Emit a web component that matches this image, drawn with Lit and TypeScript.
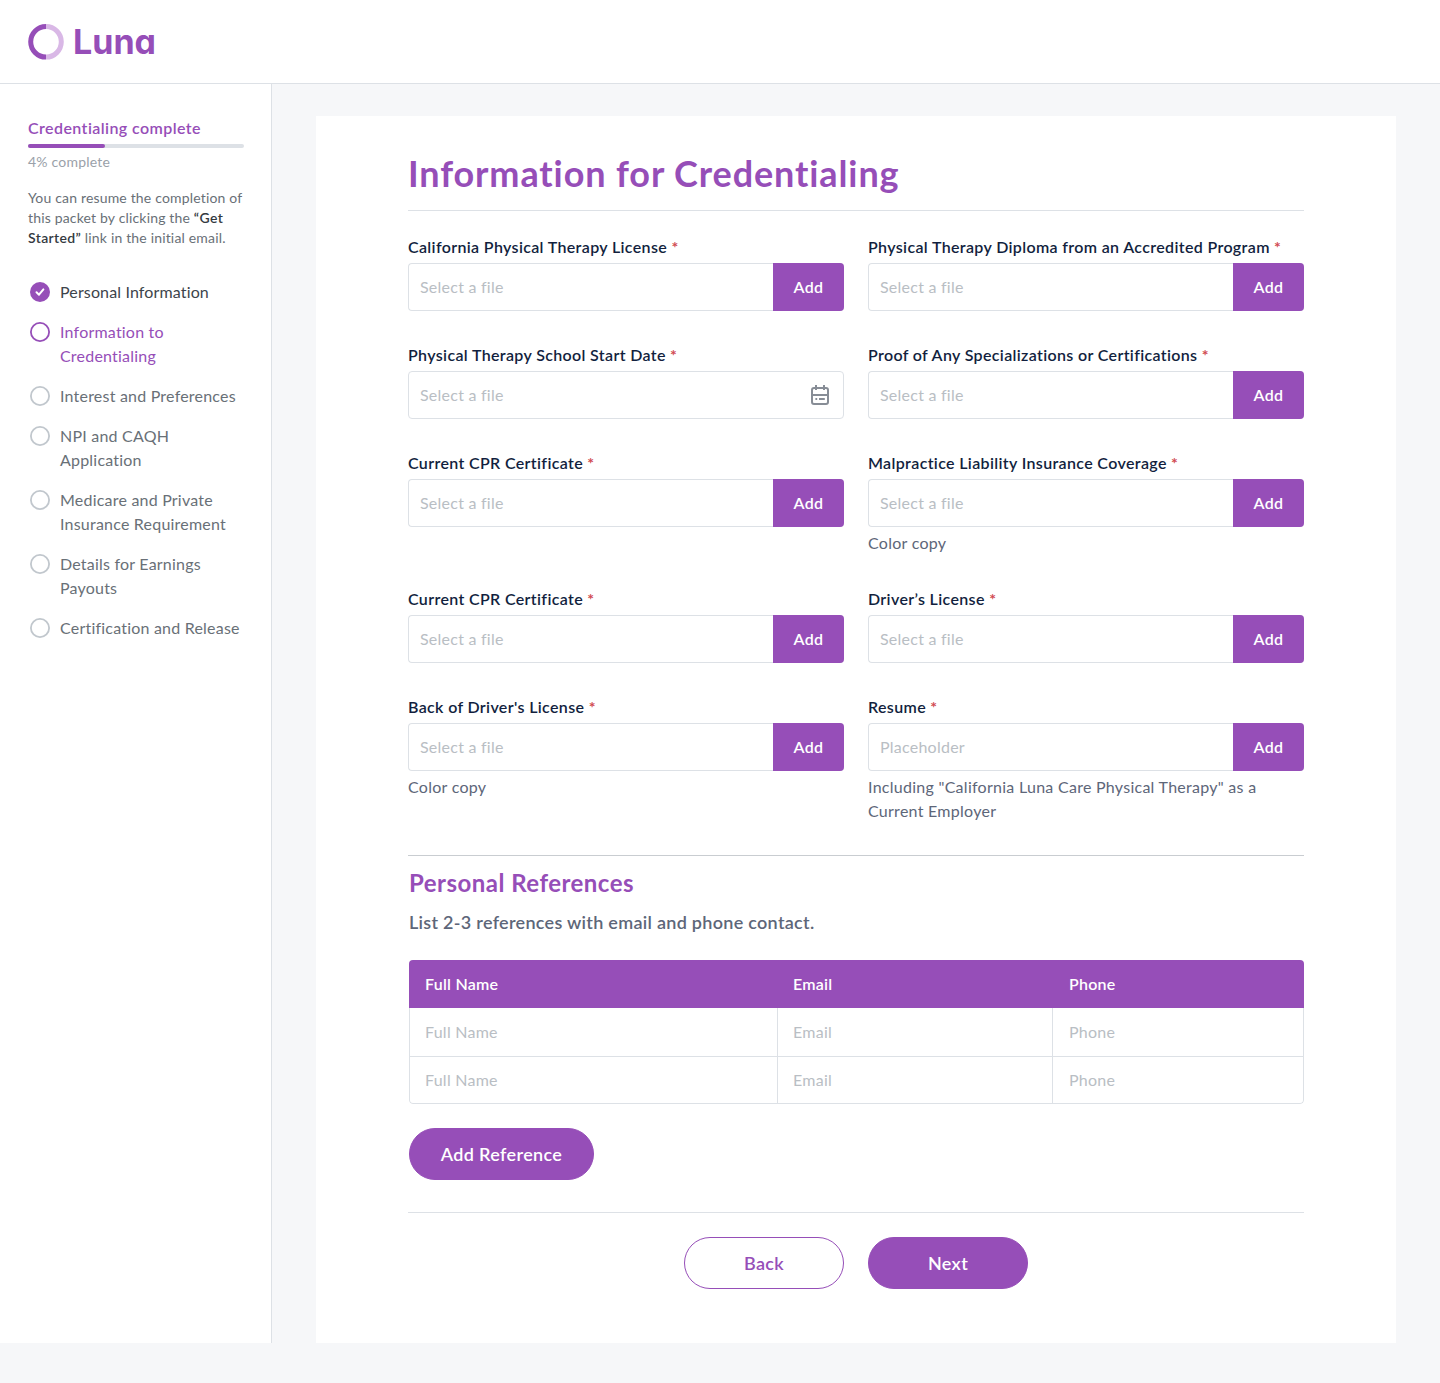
import { LitElement, html, css, svg, nothing } from "lit";
import { customElement, property } from "lit/decorators.js";
import { classMap } from "lit/directives/class-map.js";

interface Step {
  label: string;
  state: "done" | "current" | "todo";
}

interface Field {
  label: string;
  placeholder?: string;
  hint?: string;
  kind?: "file" | "date";
}

const STEPS: Step[] = [
  { label: "Personal Information", state: "done" },
  { label: "Information to Credentialing", state: "current" },
  { label: "Interest and Preferences", state: "todo" },
  { label: "NPI and CAQH Application", state: "todo" },
  { label: "Medicare and Private Insurance Requirement", state: "todo" },
  { label: "Details for Earnings Payouts", state: "todo" },
  { label: "Certification and Release", state: "todo" },
];

const FIELDS: Field[] = [
  { label: "California Physical Therapy License" },
  { label: "Physical Therapy Diploma from an Accredited Program" },
  { label: "Physical Therapy School Start Date", kind: "date" },
  { label: "Proof of Any Specializations or Certifications" },
  { label: "Current CPR Certificate" },
  { label: "Malpractice Liability Insurance Coverage", hint: "Color copy" },
  { label: "Current CPR Certificate" },
  { label: "Driver’s License" },
  { label: "Back of Driver's License", hint: "Color copy" },
  {
    label: "Resume",
    placeholder: "Placeholder",
    hint: 'Including "California Luna Care Physical Therapy" as a Current Employer',
  },
];

const COLUMNS = ["Full Name", "Email", "Phone"];

@customElement("step-item")
class StepItem extends LitElement {
  @property({ attribute: false }) step!: Step;

  static styles = css`
    :host { display: block; }
    .step {
      display: flex;
      gap: 10px;
      color: #697077;
      font-size: 16px;
      line-height: 24px;
      letter-spacing: 0.21px;
    }
    .icon { flex: none; width: 20px; height: 20px; margin: 2px 0 0 2px; color: #c1c7cd; }
    .label { flex: 1; min-width: 0; }
    .done { color: #3d444b; letter-spacing: 0.14px; }
    .current { color: #964eb8; }
    .done .icon, .current .icon { color: #964eb8; }
  `;

  render() {
    const { label, state } = this.step;
    return html`<div class=${classMap({ step: true, [state]: true })}>
      <svg class="icon" viewBox="0 0 20 20" fill="none">
        ${state === "done"
          ? svg`<circle cx="10" cy="10" r="10" fill="currentColor"/>
              <path d="M6.5 10.3 9 12.7 13.4 7.4" stroke="#fff" stroke-width="2" stroke-linecap="round" stroke-linejoin="round"/>`
          : svg`<circle cx="10" cy="10" r="9.1" stroke="currentColor" stroke-width="1.8"/>`}
      </svg>
      <span class="label">${label}</span>
    </div>`;
  }
}

@customElement("form-field")
class FormField extends LitElement {
  @property({ attribute: false }) field!: Field;

  static styles = css`
    :host { display: block; }
    .label {
      display: block;
      margin-bottom: 4px;
      color: #121f3e;
      font-size: 16px;
      font-weight: 600;
      line-height: 24px;
      letter-spacing: 0.35px;
      white-space: nowrap;
    }
    .required { color: #d14b51; font-weight: 700; }
    .control {
      box-sizing: border-box;
      display: flex;
      align-items: center;
      height: 48px;
      padding-left: 11px;
      border: 1px solid #dde1e6;
      border-radius: 4px;
      background: #fff;
    }
    .file { border-right: 0; }
    .placeholder {
      flex: 1;
      color: #b9bec4;
      font-size: 16px;
      line-height: 24px;
      letter-spacing: 0.24px;
    }
    .add {
      align-self: stretch;
      width: 71px;
      margin: -1px 0;
      padding: 0 0 2px;
      border: 0;
      border-radius: 0 4px 4px 0;
      background: #964eb8;
      color: #fff;
      font: inherit;
      font-size: 16px;
      font-weight: 600;
      letter-spacing: 0.4px;
    }
    .calendar { width: 24px; height: 24px; margin-right: 11px; color: #878d96; }
    .hint {
      margin-top: 4px;
      color: #5d6679;
      font-size: 16px;
      line-height: 24px;
      letter-spacing: 0.27px;
    }
  `;

  render() {
    const { label, placeholder = "Select a file", hint, kind = "file" } = this.field;
    return html`
      <span class="label">${label} <span class="required">*</span></span>
      <div class=${classMap({ control: true, [kind]: true })}>
        <span class="placeholder">${placeholder}</span>
        ${kind === "file"
          ? html`<button class="add">Add</button>`
          : html`<svg class="calendar" viewBox="0 0 24 24" fill="none" stroke="currentColor" stroke-width="2">
              <rect x="4" y="5" width="16" height="16" rx="2"/>
              <path d="M4 12H20M8 2V7M16 2V7M7.4 16H9.2M11 16H16.8"/>
            </svg>`}
      </div>
      ${hint ? html`<div class="hint">${hint}</div>` : nothing}
    `;
  }
}

@customElement("app-root")
class AppRoot extends LitElement {
  static styles = css`
    :host {
      display: block;
      height: 1383px;
      background: #f6f7f9;
      font-family: Lato, "Open Sans", sans-serif;
    }
    .header {
      box-sizing: border-box;
      display: flex;
      align-items: center;
      gap: 9px;
      height: 84px;
      padding: 0 0 0 28px;
      border-bottom: 1px solid #dde1e6;
      background: #fff;
      color: #964eb8;
    }
    .mark { width: 36px; height: 36px; }
    .brand {
      font-family: Inter, sans-serif;
      font-feature-settings: "cv11", "ss03";
      font-size: 34px;
      font-weight: 700;
      line-height: 36px;
    }
    .body { display: flex; height: 1259px; }
    .sidebar {
      box-sizing: border-box;
      flex: none;
      width: 272px;
      padding: 32px 27px 0 28px;
      border-right: 1px solid #dde1e6;
      background: #fff;
    }
    .progress-title {
      color: #964eb8;
      font-size: 16px;
      font-weight: 600;
      line-height: 24px;
      letter-spacing: 0.42px;
    }
    .track { height: 4px; margin-top: 4px; border-radius: 2px; background: #dde1e6; }
    .bar { width: 77px; height: 4px; border-radius: 2px; background: #964eb8; }
    .percent {
      margin-top: 4px;
      color: #9aa1a9;
      font-size: 14px;
      line-height: 20px;
      letter-spacing: 0.2px;
    }
    .note {
      margin: 16px -4px 0 0;
      color: #697077;
      font-size: 14px;
      line-height: 20px;
      letter-spacing: 0.17px;
    }
    .note-line { display: block; white-space: nowrap; }
    .strong { color: #343a3f; font-weight: 600; letter-spacing: 0.35px; }
    .steps { display: grid; gap: 16px; margin: 32px 0 0; }
    .card {
      box-sizing: border-box;
      width: 1080px;
      margin: 32px 0 0 44px;
      padding: 33px 92px 0;
      background: #fff;
    }
    .title {
      margin: 0;
      color: #964eb8;
      font-size: 36px;
      font-weight: 700;
      line-height: 48px;
      letter-spacing: 0.89px;
    }
    .rule { height: 1px; background: #dde1e6; }
    .title-rule { margin-top: 13px; }
    .section-rule { margin-top: 32px; background: #c9cdd1; }
    .footer-rule { margin-top: 32px; }
    .fields {
      display: grid;
      grid-template-columns: 436px 436px;
      gap: 32px 24px;
      margin-top: 24px;
    }
    .references { padding-left: 1px; }
    .section-title {
      margin: 11px 0 0;
      color: #964eb8;
      font-size: 24px;
      font-weight: 700;
      line-height: 32px;
      letter-spacing: 0.48px;
    }
    .lead {
      margin: 11px 0 0;
      color: #5d6679;
      font-size: 18px;
      font-weight: 600;
      line-height: 24px;
      letter-spacing: 0.29px;
    }
    .table {
      margin-top: 26px;
      border-radius: 4px;
      overflow: hidden;
      font-size: 16px;
      letter-spacing: 0.25px;
    }
    .row {
      box-sizing: border-box;
      display: grid;
      grid-template-columns: 368px 276px 1fr;
      height: 48px;
      line-height: 48px;
    }
    .head { background: #964eb8; color: #fff; font-weight: 600; }
    .head .cell { padding-left: 16px; }
    .rows {
      box-sizing: border-box;
      height: 96px;
      border: 1px solid #dde1e6;
      border-top: 0;
      border-radius: 0 0 4px 4px;
      color: #b9bec4;
    }
    .rows .row { grid-template-columns: 368px 275px 1fr; height: 49px; border-bottom: 1px solid #dde1e6; }
    .rows .row:last-child { height: 46px; border-bottom: 0; line-height: 46px; }
    .rows .cell { padding-left: 15px; }
    .rows .cell:not(:first-child) { border-left: 1px solid #dde1e6; margin-left: -1px; }
    .rows .cell:last-child { padding-left: 16px; }
    .pill {
      box-sizing: border-box;
      height: 52px;
      padding: 0;
      border: 1px solid #964eb8;
      border-radius: 26px;
      background: #964eb8;
      color: #fff;
      font: inherit;
      font-size: 18px;
      font-weight: 600;
      letter-spacing: 0.35px;
    }
    .add-reference { display: block; width: 185px; margin-top: 24px; }
    .nav { width: 160px; }
    .outline { background: #fff; color: #964eb8; }
    .actions { display: flex; justify-content: center; gap: 24px; margin-top: 24px; }
  `;

  render() {
    return html`
      <div class="header">
        <svg class="mark" viewBox="0 0 36 36" fill="none" stroke-width="5">
          <path d="M18 2.5a15.3 15.3 0 0 0 0 30.6" stroke="#964eb8"/>
          <path d="M18 2.5a15.3 15.3 0 0 1 0 30.6" stroke="#d9b8e6"/>
        </svg>
        <span class="brand">Luna</span>
      </div>
      <div class="body">
        <div class="sidebar">
          <div class="progress-title">Credentialing complete</div>
          <div class="track"><div class="bar"></div></div>
          <div class="percent">4% complete</div>
          <div class="note">
            <span class="note-line">You can resume the completion of</span>
            <span class="note-line">this packet by clicking the <span class="strong">“Get</span></span>
            <span class="note-line"><span class="strong">Started”</span> link in the initial email.</span>
          </div>
          <div class="steps">${STEPS.map((s) => html`<step-item .step=${s}></step-item>`)}</div>
        </div>
        <div class="card">
          <h1 class="title">Information for Credentialing</h1>
          <div class="rule title-rule"></div>
          <div class="fields">${FIELDS.map((f) => html`<form-field .field=${f}></form-field>`)}</div>
          <div class="rule section-rule"></div>
          <div class="references">
            <h2 class="section-title">Personal References</h2>
            <p class="lead">List 2-3 references with email and phone contact.</p>
            <div class="table">
              <div class="row head">${COLUMNS.map((c) => html`<span class="cell">${c}</span>`)}</div>
              <div class="rows">
                ${[0, 1].map(
                  () => html`<div class="row">${COLUMNS.map((c) => html`<span class="cell">${c}</span>`)}</div>`
                )}
              </div>
            </div>
            <button class="pill add-reference">Add Reference</button>
          </div>
          <div class="rule footer-rule"></div>
          <div class="actions">
            <button class="pill nav outline">Back</button>
            <button class="pill nav">Next</button>
          </div>
        </div>
      </div>
    `;
  }
}
